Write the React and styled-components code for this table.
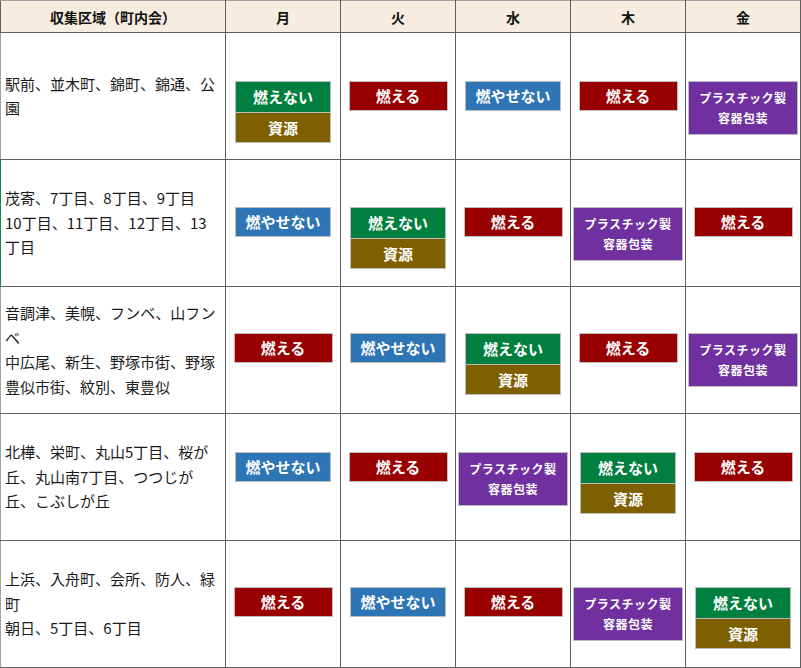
import React from 'react'
import styled, { createGlobalStyle } from 'styled-components'

const GlobalStyle = createGlobalStyle`
    html, body {
        margin: 0;
        padding: 0;
        background: #ffffff;
    }
    body {
        font-family: "Noto Sans CJK JP", "Noto Sans", sans-serif;
    }
`

const Table = styled.table`
    width: 801px;
    table-layout: fixed;
    border-collapse: collapse;
    border-top: 1px solid #a3a3a3;
    border-left: 1px solid #a3a3a3;
    border-right: 1px solid #555555;
    border-bottom: 1px solid #555555;
`

const HeadCell = styled.th`
    width: ${pr => pr.wide ? '224px' : '114px'};
    height: 31px;
    padding: 0;
    background: #f6ecdf;
    color: #111111;
    font-size: 14px;
    font-weight: bold;
    text-align: center;
    border: 1px solid #5f5f5f;
    border-top-color: #a3a3a3;
`

const Row = styled.tr`
    height: 127px;
`

const AreaCell = styled.td`
    padding: 0 9px 0 4px;
    vertical-align: middle;
    font-size: 15px;
    line-height: 24.5px;
    color: #1a1a1a;
    border: 1px solid #5f5f5f;
    border-left-color: ${pr => pr.mark ? '#16864a' : '#a3a3a3'};
`

const DayCell = styled.td`
    padding: ${pr => pr.offset}px 0 0 0;
    vertical-align: top;
    border: 1px solid #5f5f5f;
`

const Badges = styled.div`
    display: flex;
    flex-direction: column;
    align-items: center;
`

const Stack = styled.div`
    display: flex;
    flex-direction: column;
    width: ${pr => pr.width}px;
    border: 1px solid #bdbdbd;
    box-sizing: border-box;
`

const Label = styled.div`
    display: flex;
    flex-direction: column;
    align-items: center;
    justify-content: center;
    height: ${pr => pr.height}px;
    background: ${pr => pr.bg};
    color: #ffffff;
    font-size: ${pr => pr.small ? '12px' : '15px'};
    line-height: ${pr => pr.small ? '20px' : '20px'};
    letter-spacing: ${pr => pr.small ? '0.5px' : '0'};
    font-weight: bold;
    & + & {
        border-top: 1px solid #bdbdbd;
    }
`

const kinds = {
    moeru: { width: 99, parts: [{ text: '燃える', bg: '#990000', height: 28 }] },
    moyasenai: { width: 96, parts: [{ text: '燃やせない', bg: '#2e75b6', height: 28 }] },
    moenai: {
        width: 96,
        parts: [
            { text: '燃えない', bg: '#007f3e', height: 30 },
            { text: '資源', bg: '#7f6000', height: 29 },
        ],
    },
    pura: { width: 110, parts: [{ text: ['プラスチック製', '容器包装'], bg: '#7030a0', height: 52, small: true }] },
}

const rows = [
    {
        area: ['駅前、並木町、錦町、錦通、公園'],
        offset: 48,
        days: ['moenai', 'moeru', 'moyasenai', 'moeru', 'pura'],
    },
    {
        area: ['茂寄、7丁目、8丁目、9丁目', '10丁目、11丁目、12丁目、13丁目'],
        offset: 47,
        mark: true,
        days: ['moyasenai', 'moenai', 'moeru', 'pura', 'moeru'],
    },
    {
        area: ['音調津、美幌、フンベ、山フンベ', '中広尾、新生、野塚市街、野塚豊似市街、紋別、東豊似'],
        offset: 46,
        days: ['moeru', 'moyasenai', 'moenai', 'moeru', 'pura'],
    },
    {
        area: ['北樺、栄町、丸山5丁目、桜が丘、丸山南7丁目、つつじが丘、こぶしが丘'],
        offset: 38,
        days: ['moyasenai', 'moeru', 'pura', 'moenai', 'moeru'],
    },
    {
        area: ['上浜、入舟町、会所、防人、緑町', '朝日、5丁目、6丁目'],
        offset: 46,
        days: ['moeru', 'moyasenai', 'moeru', 'pura', 'moenai'],
    },
]

const week = ['月', '火', '水', '木', '金']

function Badge({ kind }) {
    const k = kinds[kind]
    return (
        <Badges>
            <Stack width={k.width}>
                {k.parts.map((p, i) => (
                    <Label key={i} bg={p.bg} height={p.height} small={p.small}>
                        {Array.isArray(p.text) ? p.text.map(t => <span key={t}>{t}</span>) : p.text}
                    </Label>
                ))}
            </Stack>
        </Badges>
    )
}

export default function App() {
    return (
        <>
            <GlobalStyle />
            <Table>
                <thead>
                    <tr>
                        <HeadCell wide>収集区域（町内会）</HeadCell>
                        {week.map(d => <HeadCell key={d}>{d}</HeadCell>)}
                    </tr>
                </thead>
                <tbody>
                    {rows.map((r, i) => (
                        <Row key={i}>
                            <AreaCell mark={r.mark}>
                                {r.area.map((line, j) => (
                                    <React.Fragment key={j}>
                                        {j > 0 && <br />}
                                        {line}
                                    </React.Fragment>
                                ))}
                            </AreaCell>
                            {r.days.map((d, j) => (
                                <DayCell key={j} offset={r.offset}>
                                    <Badge kind={d} />
                                </DayCell>
                            ))}
                        </Row>
                    ))}
                </tbody>
            </Table>
        </>
    )
}
